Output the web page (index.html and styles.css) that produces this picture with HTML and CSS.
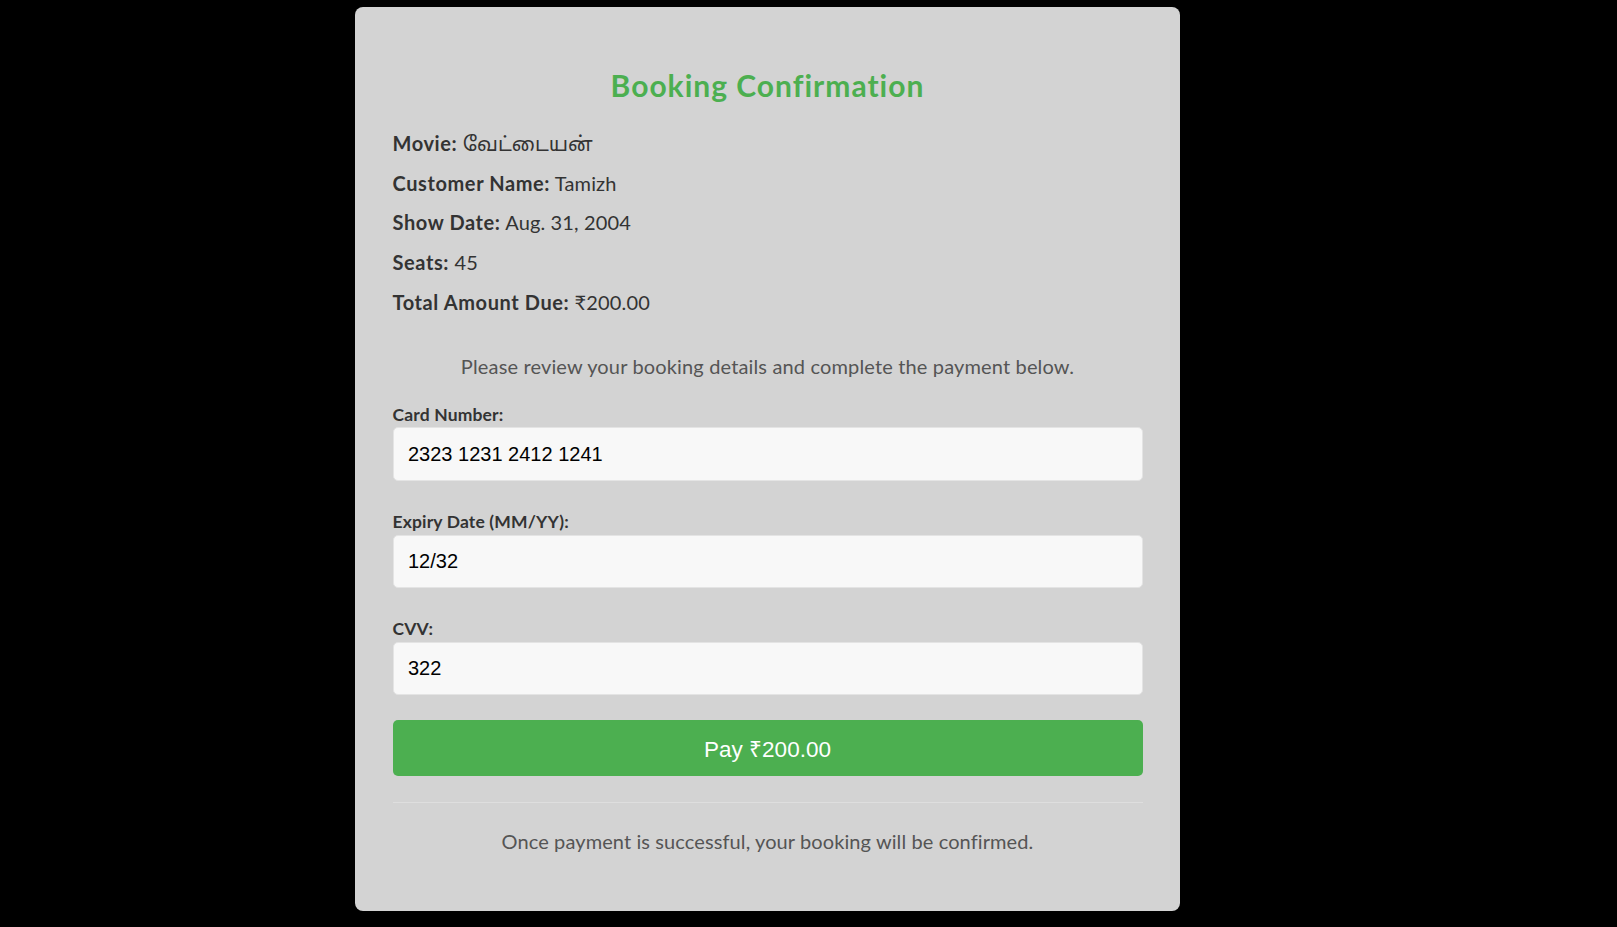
FILE: index.html
```html
<!DOCTYPE html>
<html lang="en">
<head>
<meta charset="utf-8">
<title>Booking Confirmation</title>
<link rel="stylesheet" href="styles.css">
</head>
<body>
<div class="card">
  <h2 class="title">Booking Confirmation</h2>
  <div class="details">
    <p class="row"><strong>Movie:</strong> <span class="tamil">வேட்டையன்</span></p>
    <p class="row"><strong>Customer Name:</strong> Tamizh</p>
    <p class="row"><strong>Show Date:</strong> Aug. 31, 2004</p>
    <p class="row"><strong>Seats:</strong> 45</p>
    <p class="row"><strong>Total Amount Due:</strong> ₹200.00</p>
  </div>
  <p class="intro">Please review your booking details and complete the payment below.</p>
  <form class="pay-form">
    <div class="field">
      <label class="label" for="card">Card Number:</label>
      <input class="input" id="card" type="text" value="2323 1231 2412 1241">
    </div>
    <div class="field">
      <label class="label" for="exp">Expiry Date (MM/YY):</label>
      <input class="input" id="exp" type="text" value="12/32">
    </div>
    <div class="field">
      <label class="label" for="cvv">CVV:</label>
      <input class="input" id="cvv" type="text" value="322">
    </div>
    <button class="pay-btn" type="button">Pay ₹200.00</button>
  </form>
  <hr class="divider">
  <p class="footer-note">Once payment is successful, your booking will be confirmed.</p>
</div>
</body>
</html>
```
FILE: styles.css
```css
html, body {
  margin: 0;
  padding: 0;
  background: #000;
}

body {
  font-family: "Lato", "Noto Sans Tamil", "Lohit Tamil", "Noto Sans", sans-serif;
  color: #333;
}

.card {
  box-sizing: border-box;
  width: 825px;
  margin: 7px 0 16px 355px;
  padding: 37.5px 37.5px 57px;
  background: #d3d3d3;
  border-radius: 8px;
}

.title {
  margin: 20px 0 25.8px;
  font-size: 30px;
  line-height: 40px;
  font-weight: 700;
  letter-spacing: 1px;
  color: #4caf50;
  text-align: center;
}

.details {
  display: flex;
  flex-direction: column;
  gap: 13.6px;
}

.row {
  margin: 0;
  font-size: 20px;
  line-height: 26px;
  letter-spacing: 0.15px;
}

.row strong {
  font-weight: 700;
  letter-spacing: 0.6px;
}

.tamil {
  font-family: "Noto Sans Tamil", "Lohit Tamil", "Noto Sans", sans-serif;
  line-height: 0;
  letter-spacing: 0;
}

.intro {
  margin: 38.6px 0 24.4px;
  font-size: 20px;
  line-height: 26px;
  letter-spacing: 0.15px;
  color: #555;
  text-align: center;
}

.pay-form {
  display: flex;
  flex-direction: column;
  gap: 30px;
}

.field {
  display: flex;
  flex-direction: column;
  gap: 1.8px;
}

.label {
  font-size: 17.5px;
  line-height: 22px;
  font-weight: 700;
  letter-spacing: 0.15px;
  color: #333;
}

.input {
  box-sizing: border-box;
  width: 100%;
  height: 53.3px;
  padding: 0 14.5px;
  border: 1px solid #e4e4e4;
  border-radius: 5px;
  background: #f8f8f8;
  font-family: "Liberation Sans", Arial, sans-serif;
  font-size: 20px;
  color: #000;
  outline: none;
}

.pay-btn {
  margin-top: -4.5px;
  height: 56px;
  border: none;
  border-radius: 5px;
  background: #4caf50;
  color: #fff;
  font-family: "Liberation Sans", Arial, sans-serif;
  font-size: 22.5px;
  cursor: pointer;
}

.divider {
  margin: 25.5px 0 0;
  border: none;
  border-top: 1.25px solid #dedede;
}

.footer-note {
  margin: 25px 0 0;
  font-size: 20px;
  line-height: 26px;
  letter-spacing: 0.1px;
  color: #555;
  text-align: center;
}
```
